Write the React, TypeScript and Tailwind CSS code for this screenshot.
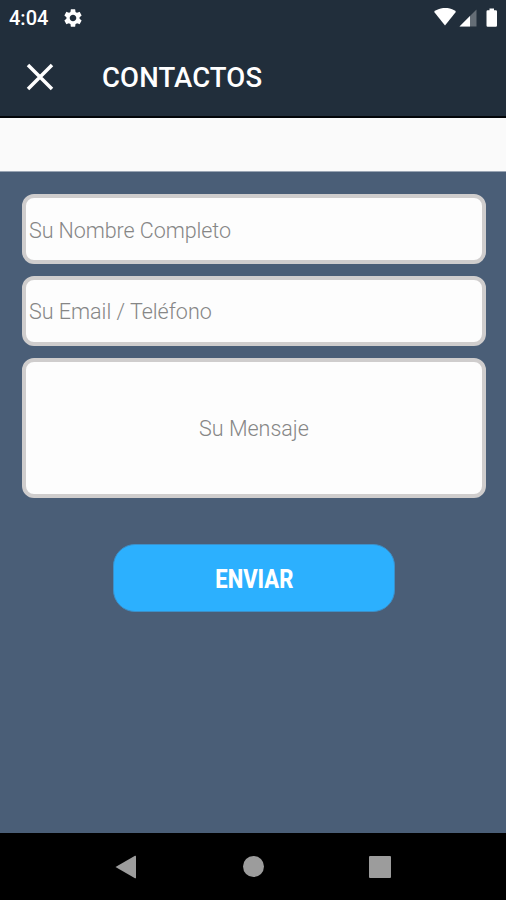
import { MdSettings } from "react-icons/md"

export default function App() {
  return (
    <div className="flex h-[900px] w-[506px] flex-col overflow-hidden bg-[#4a5e77] font-[Roboto,sans-serif]">
      <StatusBar />
      <Header title="CONTACTOS" />
      <div className="h-[54px] border-b border-[#9aa5b4] bg-[#fafafa]"></div>
      <ContactForm />
      <NavigationBar />
    </div>
  )
}

function StatusBar() {
  return (
    <div className="flex h-9 items-center bg-[#212e3b] pl-[9px] pr-[7px] text-white">
      <span className="text-[20px] font-medium leading-9">4:04</span>
      <MdSettings className="ml-[14px] size-[22px]" />
      <svg className="ml-auto h-5 w-[66px]" viewBox="0 0 66 20" fill="currentColor">
        <path d="M1 3.700C7.500-1.400 17.500-1.400 23 3.700L12 17.500Z" />
        <path d="M43.500 1.500V18.500H26.500Z" opacity=".3" />
        <path d="M37 8V18.500H26.500Z" />
        <path d="M56.500.5h4.500v1.700h1.800q1.200 0 1.200 1.200v14.200q0 1.200-1.200 1.200h-8.100q-1.200 0-1.200-1.200V3.400q0-1.200 1.200-1.200H56.500Z" />
      </svg>
    </div>
  )
}

function Header({ title }: { title: string }) {
  return (
    <header className="flex h-[82px] items-center border-b-2 border-[#020508] bg-[#212e3b] pl-[26px] pt-px text-white">
      <button aria-label="Cerrar">
        <svg className="size-7" viewBox="0 0 28 28" fill="none" stroke="currentColor" strokeWidth="3.500">
          <path d="M2 2 26 26M26 2 2 26" />
        </svg>
      </button>
      <h1 className="ml-12 pt-[3px] text-[27.500px] font-medium leading-8 tracking-[0.120px]">{title}</h1>
    </header>
  )
}

function ContactForm() {
  const field =
    "block w-full rounded-[12px] border-4 border-[#cfcdcd] bg-[#fdfdfd] text-[21.500px] font-light text-black outline-none placeholder:text-[#868686] placeholder:opacity-100"

  return (
    <form className="flex flex-1 flex-col gap-3 pl-[22px] pr-[20px] pt-[22px]">
      <input className={`${field} h-[70px] px-[3px] pt-[3px] tracking-[-0.070px]`} placeholder="Su Nombre Completo" />
      <input className={`${field} h-[70px] px-[3px] pt-px`} placeholder="Su Email / Teléfono" />
      <textarea
        className={`${field} h-[140px] resize-none pt-[54px] text-center leading-[26px]`}
        placeholder="Su Mensaje"
      />
      <button
        type="button"
        className="ml-[91px] mt-[34px] flex h-[68px] w-[282px] items-center justify-center rounded-[22px] border border-[#3c90c9] bg-[#2cb0fe] pt-[3px] text-white"
      >
        <span className="scale-x-[0.880] text-[25px] font-extrabold">ENVIAR</span>
      </button>
    </form>
  )
}

function NavigationBar() {
  return (
    <nav className="flex h-[67px] items-center justify-between bg-black pl-[115px] pr-[115px] text-[#9c9c9c]">
      <svg className="h-6 w-[22px]" viewBox="0 0 22 24" fill="currentColor">
        <path d="M0.500 12 20 0.800Q21 .3 21 1.500v21q0 1.200-1 .7Z" />
      </svg>
      <span className="size-[21px] rounded-full bg-[#9c9c9c]"></span>
      <span className="size-[22px] rounded-[1px] bg-[#9c9c9c]"></span>
    </nav>
  )
}
